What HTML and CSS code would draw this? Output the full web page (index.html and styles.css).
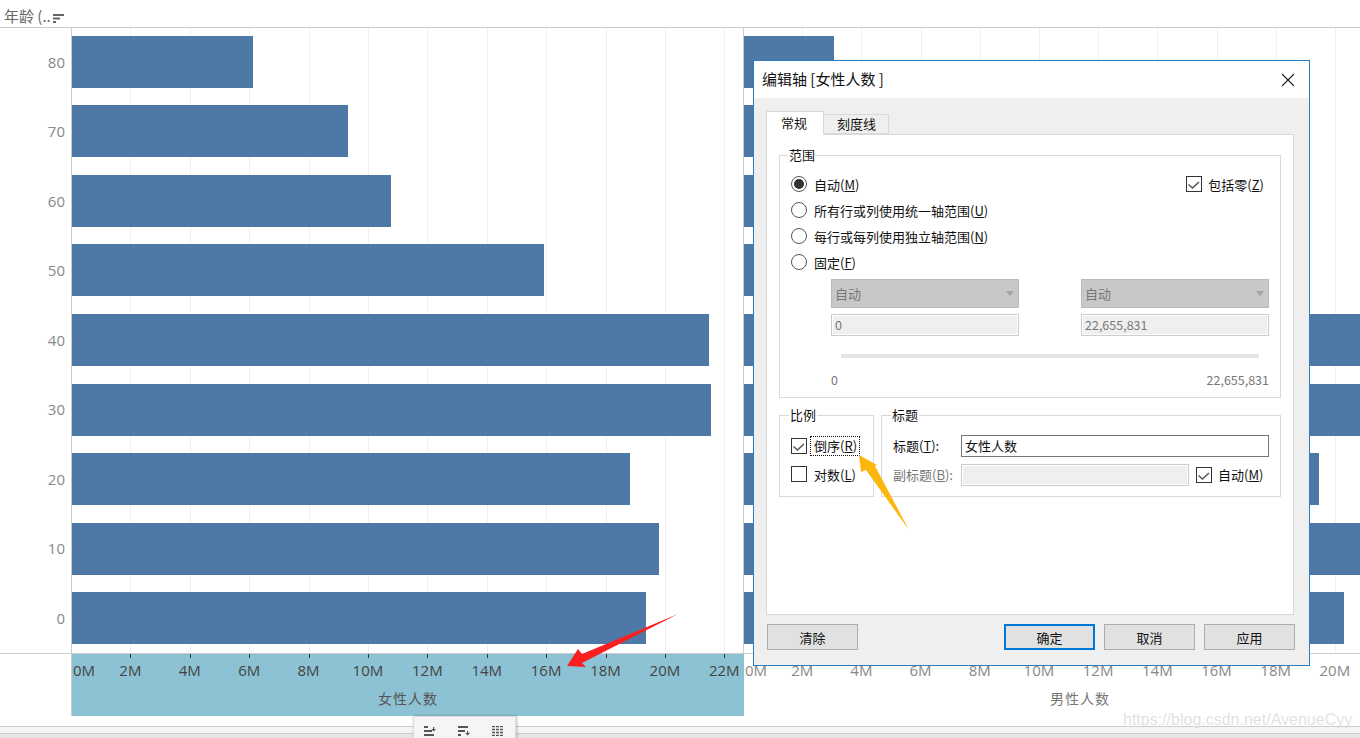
FILE: index.html
```html
<!DOCTYPE html>
<html>
<head>
<meta charset="utf-8"/>
<title>年龄</title>
<link rel="stylesheet" href="styles.css">
</head>
<body>

<div class="head">
  <span class="head-label">年龄 (..</span>
  <svg class="sort-icon" width="11" height="9" viewBox="0 0 11 9"><path d="M0 0h11v2H0zM0 3.500h7v2H0zM0 7h3v2H0z" fill="#666"/></svg>
</div>

<div class="chart">
  <div class="ylabels">
    <div>80</div><div>70</div><div>60</div><div>50</div><div>40</div><div>30</div><div>20</div><div>10</div><div>0</div>
  </div>
  <div class="pane pane-left">
    <div class="grid grid-left"><i></i><i></i><i></i><i></i><i></i><i></i><i></i><i></i><i></i><i></i><i></i></div>
    <div class="bars">
      <div class="bar" style="width:181px"></div>
      <div class="bar" style="width:276px"></div>
      <div class="bar" style="width:319px"></div>
      <div class="bar" style="width:472px"></div>
      <div class="bar" style="width:637px"></div>
      <div class="bar" style="width:639px"></div>
      <div class="bar" style="width:558px"></div>
      <div class="bar" style="width:587px"></div>
      <div class="bar" style="width:574px"></div>
    </div>
  </div>
  <div class="pane pane-right">
    <div class="grid grid-right"><i></i><i></i><i></i><i></i><i></i><i></i><i></i><i></i><i></i><i></i><i></i></div>
    <div class="bars">
      <div class="bar" style="width:90px"></div>
      <div class="bar" style="width:300px"></div>
      <div class="bar" style="width:300px"></div>
      <div class="bar" style="width:400px"></div>
      <div class="bar" style="width:617px"></div>
      <div class="bar" style="width:617px"></div>
      <div class="bar" style="width:575px"></div>
      <div class="bar" style="width:617px"></div>
      <div class="bar" style="width:600px"></div>
    </div>
  </div>
</div>

<div class="axes">
  <div class="axis-spacer"></div>
  <div class="axis axis-left">
    <div class="ticks ticks-left"><i></i><i></i><i></i><i></i><i></i><i></i><i></i><i></i><i></i><i></i><i></i></div>
    <div class="tlabels tlabels-left">
      <span class="first">0M</span><span>2M</span><span>4M</span><span>6M</span><span>8M</span><span>10M</span><span>12M</span><span>14M</span><span>16M</span><span>18M</span><span>20M</span><span>22M</span>
    </div>
    <div class="axis-title">女性人数</div>
  </div>
  <div class="axis axis-right">
    <div class="tlabels tlabels-right">
      <span class="first">0M</span><span>2M</span><span>4M</span><span>6M</span><span>8M</span><span>10M</span><span>12M</span><span>14M</span><span>16M</span><span>18M</span><span>20M</span>
    </div>
    <div class="axis-title">男性人数</div>
  </div>
</div>

<div class="foot">
  <div class="foot-band"></div>
</div>

<div class="toolbar">
  <svg width="12" height="10" viewBox="0 0 12 10"><path d="M0 0h4v2H0zM0 4h8v2H0zM0 8h10v2H0zM9 1h1.200v2H12L9.600 5.500 7.200 3H9z" fill="#555"/></svg>
  <svg width="12" height="10" viewBox="0 0 12 10"><path d="M0 0h10v2H0zM0 4h7v2H0zM0 8h3v2H0zM9 5h1.200v2H12l-2.400 2.600L7.200 7H9z" fill="#555"/></svg>
  <svg width="12" height="10" viewBox="0 0 12 10"><path d="M0 .500h12M0 3.500h12M0 6.500h12M0 9.500h12" stroke="#555" stroke-width="1.400" fill="none" stroke-dasharray="3 1"/></svg>
</div>

<div class="dialog">
  <div class="dlg-title">
    <span>编辑轴 [女性人数 ]</span>
    <svg width="14" height="14" viewBox="0 0 14 14"><path d="M1 1l12 12M13 1L1 13" stroke="#222" stroke-width="1.100" fill="none"/></svg>
  </div>
  <div class="dlg-body">
    <div class="tabs">
      <div class="tab tab-on">常规</div>
      <div class="tab">刻度线</div>
    </div>
    <div class="tab-panel">
      <fieldset class="group group-range">
        <legend>范围</legend>
        <div class="range-top">
          <div class="radios">
            <label class="opt"><span class="radio radio-on"></span>自动(<u>M</u>)</label>
            <label class="opt"><span class="radio"></span>所有行或列使用统一轴范围(<u>U</u>)</label>
            <label class="opt"><span class="radio"></span>每行或每列使用独立轴范围(<u>N</u>)</label>
            <label class="opt"><span class="radio"></span>固定(<u>F</u>)</label>
          </div>
          <label class="opt include-zero"><span class="check"><svg class="tick" width="14" height="14" viewBox="0 0 14 14"><path d="M1.500 7.500L5.500 11L12 5"/></svg></span>包括零(<u>Z</u>)</label>
        </div>
        <div class="fixed-row">
          <div class="fixed-col">
            <div class="select">自动<span class="caret"></span></div>
            <div class="field">0</div>
          </div>
          <div class="fixed-col">
            <div class="select">自动<span class="caret"></span></div>
            <div class="field">22,655,831</div>
          </div>
        </div>
        <div class="track"></div>
        <div class="ends"><span>0</span><span>22,655,831</span></div>
      </fieldset>

      <div class="lower">
        <fieldset class="group group-scale">
          <legend>比例</legend>
          <label class="opt opt-small"><span class="check"><svg class="tick" width="14" height="14" viewBox="0 0 14 14"><path d="M1.500 7.500L5.500 11L12 5"/></svg></span><span class="focused">倒序(<u>R</u>)</span></label>
          <label class="opt opt-small"><span class="check"></span><span class="plain">对数(<u>L</u>)</span></label>
        </fieldset>
        <fieldset class="group group-title">
          <legend>标题</legend>
          <div class="title-row">
            <span class="title-label">标题(<u>T</u>):</span>
            <div class="text-input">女性人数</div>
          </div>
          <div class="title-row">
            <span class="title-label muted">副标题(<u>B</u>):</span>
            <div class="field field-sub"></div>
            <label class="opt opt-auto"><span class="check"><svg class="tick" width="14" height="14" viewBox="0 0 14 14"><path d="M1.500 7.500L5.500 11L12 5"/></svg></span>自动(<u>M</u>)</label>
          </div>
        </fieldset>
      </div>
    </div>
    <div class="dlg-buttons">
      <button class="btn">清除</button>
      <span class="btn-gap"></span>
      <button class="btn btn-default">确定</button>
      <button class="btn">取消</button>
      <button class="btn">应用</button>
    </div>
  </div>
</div>

<!-- 标注箭头 -->
<svg class="marks" width="1360" height="738" viewBox="0 0 1360 738">
  <polygon points="678,614 582,654 578,649 567,666 586,667 582,663" fill="#fb1f1f"/>
  <polygon points="859,455 877,465 875,466 909,530 866,470 861,472" fill="#fdb60d"/>
</svg>

<div class="watermark">https://blog.csdn.net/AvenueCyy</div>

</body>
</html>
```

FILE: styles.css
```css
html, body {
  margin: 0;
  height: 738px;
  overflow: hidden;
  background: #fff;
}
body {
  width: 1360px;
  position: relative;
  font-family: "Noto Sans CJK SC", "Liberation Sans", sans-serif;
}

/* top header */
.head {
  height: 24px;
  padding: 3px 0 0 4px;
  border-bottom: 1px solid #ccc;
  display: flex;
  align-items: center;
}
.head-label {
  font-size: 15px;
  color: #666;
}
.sort-icon {
  margin-left: 2px;
  margin-top: 7px;
}

/* chart */
.chart {
  height: 625px;
  display: flex;
  border-bottom: 1px solid #ccc;
}
.ylabels {
  flex: none;
  width: 72px;
  box-sizing: border-box;
  padding-top: 7.600px;
  display: flex;
  flex-direction: column;
  gap: 17.550px;
  font: 15px "Open Sans", sans-serif;
  color: #888;
  text-align: right;
  border-right: 1px solid #ccc;
}
.ylabels div {
  height: 52px;
  line-height: 52px;
  padding-right: 6px;
}
.pane {
  position: relative;
  overflow: hidden;
}
.pane-left {
  width: 671px;
  border-right: 1px solid #ccc;
}
.pane-right {
  width: 616px;
  flex: 1;
}
.grid {
  position: absolute;
  inset: 0;
  display: flex;
}
.grid i {
  flex: none;
  height: 100%;
  box-sizing: border-box;
  border-right: 1px solid #f0f0f0;
}
.grid-left i { width: 59.400px; }
.grid-right i { width: 59.200px; }
.bars {
  position: relative;
  padding-top: 7.800px;
  display: flex;
  flex-direction: column;
  gap: 17.550px;
}
.bar {
  height: 52px;
  background: #4e79a7;
}

/* axes */
.axes {
  height: 62px;
  display: flex;
}
.axis-spacer {
  width: 71px;
  border-right: 1px solid #ccc;
  flex: none;
}
.axis {
  position: relative;
  font: 15px "Open Sans", sans-serif;
}
.axis-left {
  width: 672px;
  background: #8cc2d3;
  color: #444;
}
.axis-right {
  flex: 1;
  color: #888;
}
.ticks {
  display: flex;
  height: 4px;
}
.ticks i {
  flex: none;
  width: 59.400px;
  height: 4px;
  box-sizing: border-box;
  border-right: 1px solid #333;
}
.tlabels {
  position: absolute;
  top: 6px;
  left: 0;
  height: 21px;
  line-height: 21px;
  display: flex;
}
.tlabels span {
  flex: none;
  text-align: center;
}
.tlabels-left span { width: 59.400px; }
.tlabels-left .first {
  width: 28.700px;
  text-align: left;
  padding-left: 1px;
  margin-right: -1px;
}
.tlabels-right span { width: 59.200px; }
.tlabels-right .first {
  width: 28.600px;
  text-align: left;
  padding-left: 1px;
  margin-right: -1px;
}
.axis-title {
  position: absolute;
  top: 34px;
  left: 0;
  right: 0;
  text-align: center;
  font: 14px "Noto Sans CJK SC", sans-serif;
  line-height: 20px;
  letter-spacing: 1px;
}
.axis-left .axis-title { color: #555; }
.axis-right .axis-title { width: 672px; right: auto; color: #777; }

/* bottom strip */
.foot {
  margin-top: 10px;
  border-top: 1px solid #ccc;
  height: 11px;
  background: #e6e6e6;
}
.foot-band {
  height: 6px;
  background: #f5f5f5;
  border-bottom: 1px solid #ccc;
}
.toolbar {
  position: absolute;
  left: 413px;
  top: 716px;
  width: 103px;
  height: 22px;
  box-sizing: border-box;
  background: #f5f5f5;
  border: 1px solid #ddd;
  border-bottom: 0;
  box-shadow: 1px 0 3px rgba(0, 0, 0, .25);
  display: flex;
  gap: 22px;
  padding: 9px 0 0 10px;
}

/* dialog */
.dialog {
  position: absolute;
  left: 753px;
  top: 60px;
  width: 557px;
  height: 606px;
  box-sizing: border-box;
  border: 1px solid #2b7cc0;
  background: #efefef;
  font-size: 13px;
  color: #111;
}
.dlg-title {
  height: 35px;
  padding: 0 14px 2px 8px;
  background: #fff;
  display: flex;
  align-items: center;
  justify-content: space-between;
  font-size: 15px;
}
.dlg-title svg { margin-top: 2px; }
.dlg-body {
  padding: 13px 15px 0 12px;
}
.tabs {
  display: flex;
  align-items: flex-end;
  height: 24px;
  position: relative;
  z-index: 1;
}
.tab {
  height: 20px;
  line-height: 18px;
  padding: 0 12px 0 13px;
  box-sizing: border-box;
  border: 1px solid #d9d9d9;
  border-left: 0;
  background: #efefef;
  margin-bottom: 1px;
}
.tab-on {
  height: 24px;
  line-height: 22px;
  width: 58px;
  padding: 0 0 0 14px;
  background: #fff;
  border-left: 1px solid #d9d9d9;
  border-bottom: 0;
  margin-bottom: 0;
}
.tab-panel {
  height: 481px;
  box-sizing: border-box;
  border: 1px solid #d9d9d9;
  background: #fff;
  margin-top: -1px;
  padding: 11px 12px 0 12px;
}
.group {
  margin: 0;
  padding: 0;
  border: 1px solid #d9d9d9;
  min-width: 0;
}
.group legend {
  margin-left: 8px;
  padding: 0 1px;
  line-height: 18px;
}
.group-range {
  height: 252px;
  box-sizing: border-box;
}
.range-top {
  display: flex;
  justify-content: space-between;
  padding: 7px 16px 0 11px;
}
.radios {
  display: flex;
  flex-direction: column;
}
.opt {
  display: flex;
  align-items: center;
  height: 26px;
  white-space: nowrap;
}
.opt u { text-underline-offset: 1px; }
.radio {
  width: 14px;
  height: 14px;
  border: 1px solid #555;
  border-radius: 50%;
  margin-right: 7px;
  flex: none;
  position: relative;
}
.radio-on::after {
  content: "";
  position: absolute;
  inset: 2px;
  border-radius: 50%;
  background: #333;
}
.check {
  width: 14px;
  height: 14px;
  border: 1px solid #333;
  margin-right: 6px;
  flex: none;
  display: block;
}
.tick {
  display: block;
  fill: none;
  stroke: #555;
  stroke-width: 1.500;
}
.include-zero {
  height: 26px;
}
.fixed-row {
  display: flex;
  gap: 62px;
  padding: 4px 0 0 51px;
}
.fixed-col {
  width: 188px;
}
.select {
  height: 29px;
  box-sizing: border-box;
  background: #c8c8c8;
  border: 1px solid #bbb;
  color: #777;
  line-height: 27px;
  padding-left: 3px;
  position: relative;
}
.caret {
  position: absolute;
  right: 4px;
  top: 11px;
  border: solid transparent;
  border-width: 5px 4px 0 4px;
  border-top-color: #a3a3a3;
}
.field {
  height: 22px;
  box-sizing: border-box;
  margin-top: 6px;
  background: #efefef;
  border: 1px solid #ccc;
  box-shadow: inset 0 0 0 1px #fff;
  color: #777;
  font-size: 12.500px;
  line-height: 20px;
  padding-left: 3px;
}
.track {
  height: 4px;
  margin: 18px 21px 0 61px;
  background: #e6e6e6;
}
.ends {
  display: flex;
  justify-content: space-between;
  margin: 13px 11px 0 51px;
  color: #777;
  font-size: 12.500px;
  line-height: 17px;
}
.lower {
  display: flex;
  gap: 7px;
  margin-top: 8px;
}
.group-scale {
  width: 95px;
  height: 91px;
  box-sizing: border-box;
  padding: 8px 0 0 11px;
}
.group-scale legend { margin-left: -2px; }
.group-title {
  flex: 1;
  height: 91px;
  box-sizing: border-box;
  padding: 7px 10px 0 11px;
}
.group-title legend { margin-left: -2px; }
.opt-small {
  height: 28px;
}
.opt-small .check { margin-right: 3px; }
.focused {
  outline: 1px dotted #111;
  outline-offset: -1px;
  padding: 0 3px 0 4px;
  line-height: 20px;
}
.plain { padding-left: 4px; }
.title-row {
  display: flex;
  align-items: center;
  height: 29px;
}
.title-label {
  width: 68px;
  flex: none;
}
.muted { color: #777; }
.text-input {
  width: 308px;
  height: 22px;
  box-sizing: border-box;
  border: 1px solid #777;
  line-height: 20px;
  padding-left: 3px;
}
.field-sub {
  width: 228px;
  margin-top: 0;
  flex: none;
}
.opt-auto {
  margin-left: 7px;
}
.dlg-buttons {
  display: flex;
  gap: 9px;
  padding: 9px 0 0 1px;
  margin-right: -1px;
}
.btn {
  width: 91px;
  height: 26px;
  padding: 0;
  box-sizing: border-box;
  background: #e1e1e1;
  border: 1px solid #adadad;
  font: inherit;
  color: #111;
}
.btn-gap { flex: 1; }
.btn-default {
  border: 2px solid #0078d7;
}

.marks {
  position: absolute;
  left: 0;
  top: 0;
}
.watermark {
  position: absolute;
  left: 1123px;
  top: 709px;
  font: 16px "Liberation Sans", sans-serif;
  line-height: 21px;
  color: rgba(215, 215, 215, .75);
  text-shadow: 0 0 1px rgba(255, 255, 255, .8);
  white-space: nowrap;
}
```
